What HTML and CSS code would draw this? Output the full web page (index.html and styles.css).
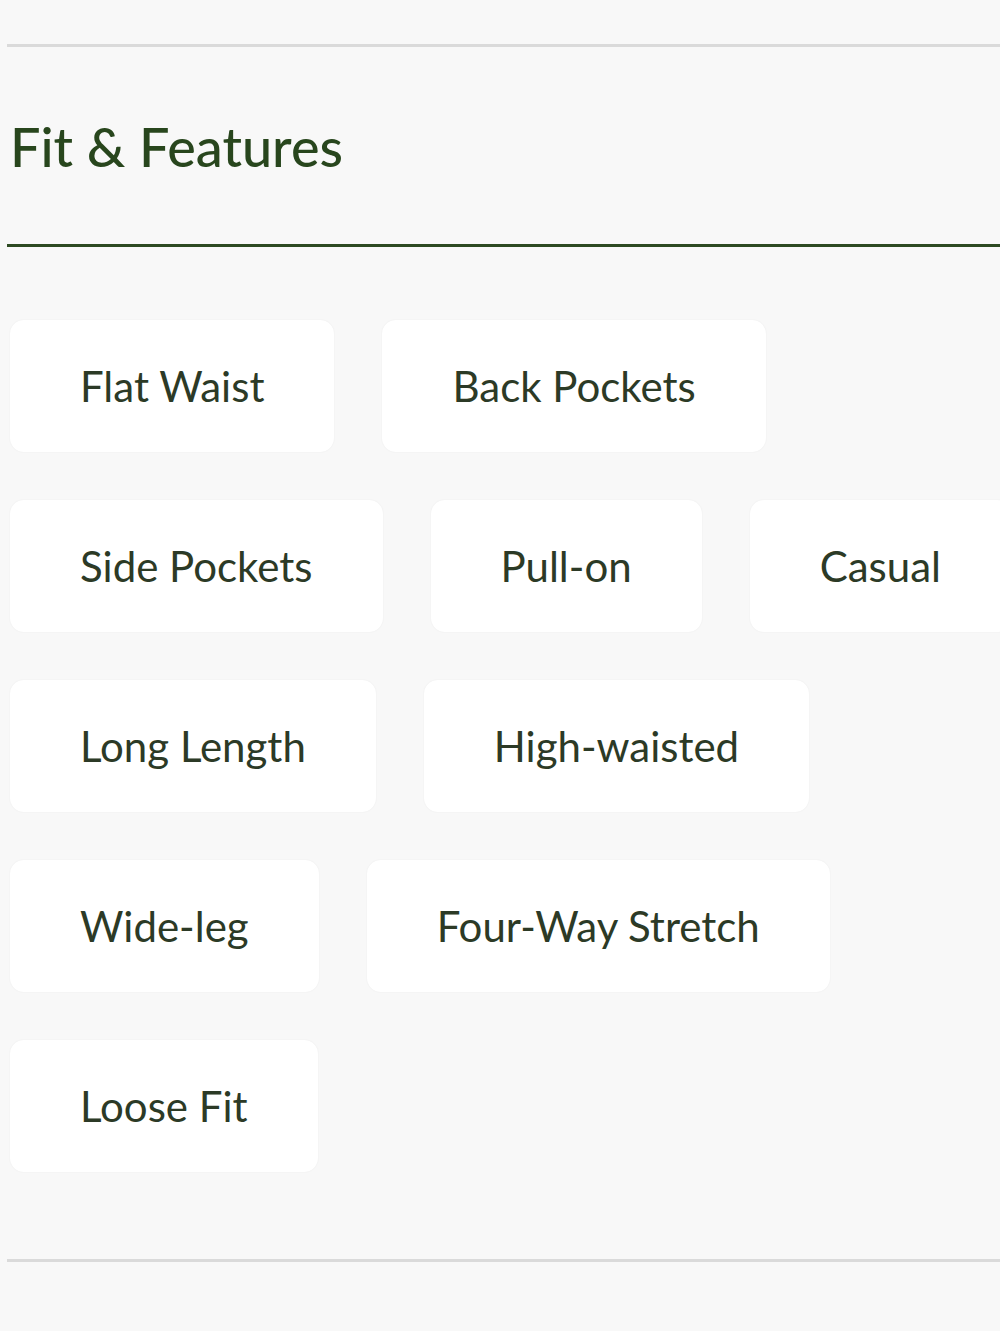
FILE: index.html
```html
<!DOCTYPE html>
<html lang="en">
<head>
<meta charset="utf-8">
<title>Fit &amp; Features</title>
<link rel="stylesheet" href="styles.css">
</head>
<body>
<main class="page">
  <hr class="rule rule--top">
  <section class="features">
    <h2 class="features__title">Fit &amp; Features</h2>
    <hr class="rule rule--accent">
    <ul class="chips">
      <li class="chip">Flat Waist</li>
      <li class="chip">Back Pockets</li>
      <li class="chip">Side Pockets</li>
      <li class="chip">Pull-on</li>
      <li class="chip">Casual</li>
      <li class="chip">Long Length</li>
      <li class="chip">High-waisted</li>
      <li class="chip">Wide-leg</li>
      <li class="chip">Four-Way Stretch</li>
      <li class="chip">Loose Fit</li>
    </ul>
  </section>
  <hr class="rule rule--bottom">
</main>
</body>
</html>
```
FILE: styles.css
```css
html, body {
  margin: 0;
  padding: 0;
  background: #f8f8f8;
  overflow: hidden;
}

body {
  font-family: "Lato", "Noto Sans", sans-serif;
  color: #2c3a26;
}

.page {
  width: 1060px;
  padding: 44px 0 0 7px;
}

.rule {
  border: 0;
  margin: 0;
  height: 3px;
}

.rule--top,
.rule--bottom {
  background: #dadada;
}

.rule--accent {
  background: #2d4a22;
}

.features__title {
  margin: 0;
  padding: 70px 0 0 3px;
  height: 197px;
  box-sizing: border-box;
  font-size: 54px;
  line-height: 60px;
  font-weight: 500;
  color: #28461d;
}

.chips {
  list-style: none;
  margin: 0;
  padding: 73px 0 87px 3px;
  display: flex;
  flex-wrap: wrap;
  gap: 48px;
}

.chip {
  height: 132px;
  padding: 0 70px;
  display: flex;
  align-items: center;
  background: #ffffff;
  border-radius: 14px;
  box-shadow: 0 0 2px rgba(0, 0, 0, 0.06);
  font-size: 42px;
  color: #2c3a26;
  white-space: nowrap;
}
```
